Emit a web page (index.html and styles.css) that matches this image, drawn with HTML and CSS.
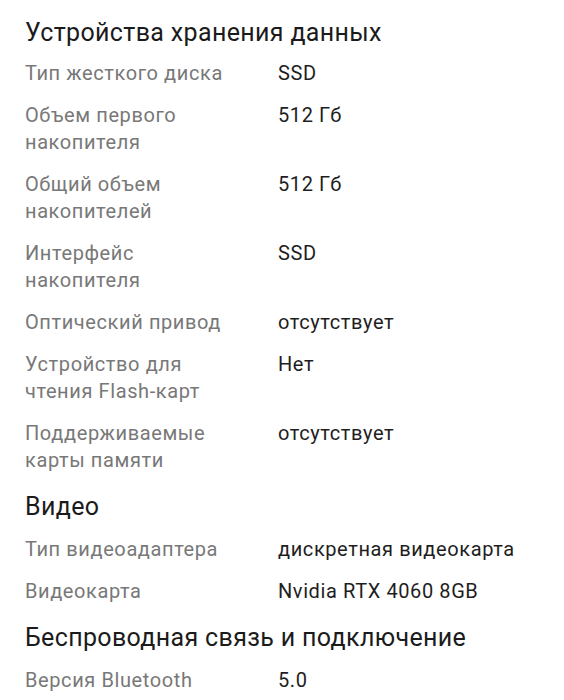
FILE: index.html
```html
<!DOCTYPE html>
<html lang="ru">
<head>
<meta charset="utf-8">
<link rel="stylesheet" href="styles.css">
</head>
<body>
<div class="specs">
  <section class="group">
    <h2 class="group-title">Устройства хранения данных</h2>
    <dl class="rows">
      <div class="row"><dt>Тип жесткого диска</dt><dd>SSD</dd></div>
      <div class="row"><dt>Объем первого накопителя</dt><dd>512 Гб</dd></div>
      <div class="row"><dt>Общий объем накопителей</dt><dd>512 Гб</dd></div>
      <div class="row"><dt>Интерфейс накопителя</dt><dd>SSD</dd></div>
      <div class="row"><dt>Оптический привод</dt><dd>отсутствует</dd></div>
      <div class="row"><dt>Устройство для чтения Flash-карт</dt><dd>Нет</dd></div>
      <div class="row"><dt>Поддерживаемые карты памяти</dt><dd>отсутствует</dd></div>
    </dl>
  </section>
  <section class="group">
    <h2 class="group-title">Видео</h2>
    <dl class="rows">
      <div class="row"><dt>Тип видеоадаптера</dt><dd>дискретная видеокарта</dd></div>
      <div class="row"><dt>Видеокарта</dt><dd>Nvidia RTX 4060 8GB</dd></div>
    </dl>
  </section>
  <section class="group">
    <h2 class="group-title">Беспроводная связь и подключение</h2>
    <dl class="rows">
      <div class="row"><dt>Версия Bluetooth</dt><dd>5.0</dd></div>
    </dl>
  </section>
</div>
</body>
</html>
```
FILE: styles.css
```css
html, body {
  margin: 0;
  padding: 0;
  background: #ffffff;
}
body {
  font-family: Roboto, "Noto Sans", sans-serif;
  overflow: hidden;
}
.specs {
  padding: 16px 20px 0 25px;
}
.group-title {
  margin: 0;
  font-size: 25px;
  font-weight: 400;
  line-height: 34px;
  letter-spacing: 0.35px;
  color: #1b1b1b;
}
.rows {
  margin: 0;
  padding: 3px 0 8px;
  display: flex;
  flex-direction: column;
}
.group + .group .rows {
  padding-top: 5px;
}
.row {
  display: grid;
  grid-template-columns: 215px 1fr;
  column-gap: 38px;
  padding: 7px 0 8px;
  font-size: 20px;
  line-height: 27px;
  letter-spacing: 0.6px;
}
.row dt {
  color: #787878;
}
.row dd {
  margin: 0;
  color: #1e1e1e;
}
```
